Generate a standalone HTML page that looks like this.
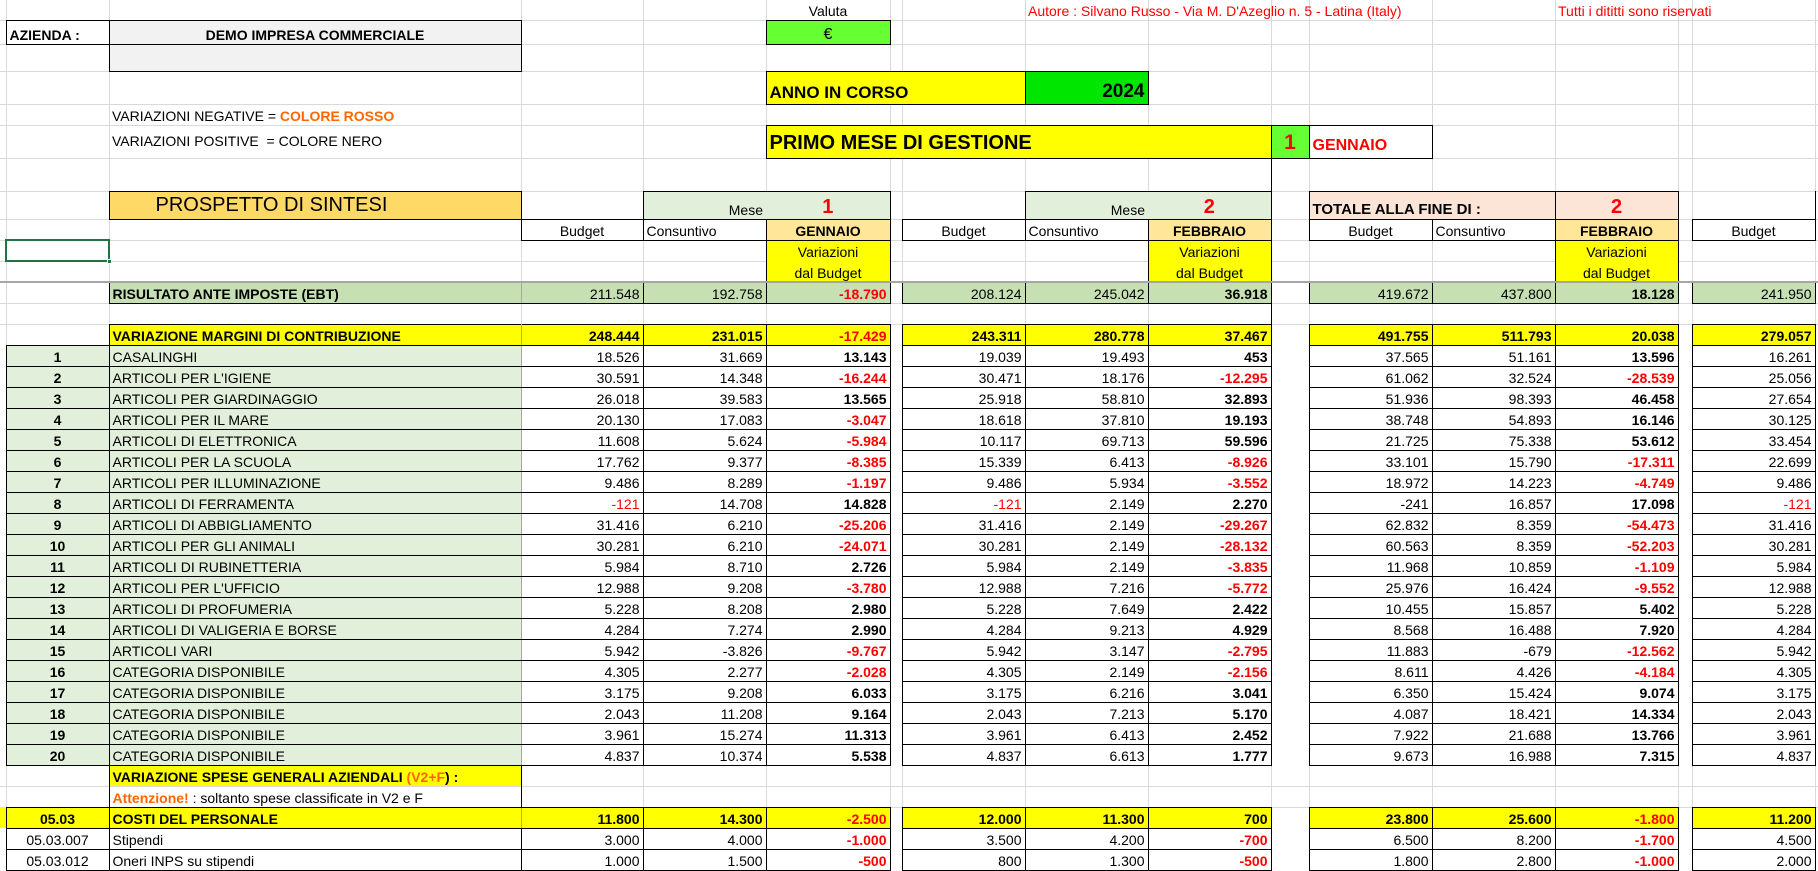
<!DOCTYPE html>
<html><head><meta charset="utf-8"><style>
*{margin:0;padding:0;box-sizing:border-box}
body{width:1818px;height:863px;overflow:hidden;background:#fff;font-family:"Liberation Sans",Arial,sans-serif;font-size:14px;color:#000;position:relative}
.v{position:absolute;top:0;width:1px;height:863px;background:#d9d9d9}
.h{position:absolute;left:0;height:1px;width:1818px;background:#d9d9d9}
table{position:absolute;left:0;top:0;border-collapse:collapse;table-layout:fixed;width:1818px}
td{padding:0 3px;white-space:nowrap;overflow:visible;vertical-align:bottom;line-height:16px;padding-bottom:1px}
.b{border:1px solid #000}
.y{background:#ffff00}.lg{background:#e2efda}.g{background:#c6e0b4}.o{background:#ffe699}.sa{background:#fce4d6}.gr{background:#f2f2f2}
.r,.n{color:#f00}.bd{font-weight:bold}.R{text-align:right}.C{text-align:center}.L{text-align:left}
tr.d td{border:1px solid #000;text-align:right}
tr.d td:nth-child(1),tr.d td:nth-child(7),tr.d td:nth-child(11),tr.d td:nth-child(15),tr.d td:nth-child(17){border:none;background:none}
tr.d td:nth-child(2){background:#e2efda;text-align:center;font-weight:bold}
tr.d td:nth-child(3){background:#e2efda;text-align:left;border-right-color:#a6a6a6}
tr.d td:nth-child(6),tr.d td:nth-child(10),tr.d td:nth-child(14){font-weight:bold}
tr.d.yy td{background:#ffff00;font-weight:bold}
tr.d.yy td:nth-child(7),tr.d.yy td:nth-child(11),tr.d.yy td:nth-child(15),tr.d.yy td:nth-child(17){background:none}
tr.d.e td{background:#c6e0b4}
tr.d.e td:nth-child(1),tr.d.e td:nth-child(7),tr.d.e td:nth-child(11),tr.d.e td:nth-child(15),tr.d.e td:nth-child(17){background:none}
tr.d.e td:nth-child(2){background:none;border:none}
tr.d.e td:nth-child(3){background:#c6e0b4;font-weight:bold}
tr.d.yy.m td:nth-child(1),tr.d.yy.m td:nth-child(2){background:none;border:none}
tr.d.w td:nth-child(2),tr.d.w td:nth-child(3){background:none;font-weight:normal}
tr.d.w td:nth-child(3){border-right-color:#000}
</style></head><body>
<div class="v" style="left:6px"></div><div class="v" style="left:109px"></div><div class="v" style="left:521px"></div><div class="v" style="left:643px"></div><div class="v" style="left:766px"></div><div class="v" style="left:890px"></div><div class="v" style="left:902px"></div><div class="v" style="left:1025px"></div><div class="v" style="left:1148px"></div><div class="v" style="left:1271px"></div><div class="v" style="left:1309px"></div><div class="v" style="left:1432px"></div><div class="v" style="left:1555px"></div><div class="v" style="left:1678px"></div><div class="v" style="left:1692px"></div><div class="v" style="left:1815px"></div>
<div class="h" style="top:20px"></div><div class="h" style="top:44px"></div><div class="h" style="top:71px"></div><div class="h" style="top:104px"></div><div class="h" style="top:125px"></div><div class="h" style="top:158px"></div><div class="h" style="top:191px"></div><div class="h" style="top:219px"></div><div class="h" style="top:240px"></div><div class="h" style="top:261px"></div><div class="h" style="top:303px"></div><div class="h" style="top:324px"></div><div class="h" style="top:786px"></div><div class="h" style="top:807px"></div>
<table>
<colgroup><col style="width:6px"><col style="width:103px"><col style="width:412px"><col style="width:122px"><col style="width:123px"><col style="width:124px"><col style="width:12px"><col style="width:123px"><col style="width:123px"><col style="width:123px"><col style="width:38px"><col style="width:123px"><col style="width:123px"><col style="width:123px"><col style="width:14px"><col style="width:123px"><col style="width:3px"></colgroup>
<tr style="height:20px"><td></td><td></td><td></td><td></td><td></td><td class="C">Valuta</td><td></td><td></td><td class="r">Autore : Silvano Russo - Via M. D'Azeglio n. 5 - Latina (Italy)</td><td></td><td></td><td></td><td></td><td class="r">Tutti i dititti sono riservati</td><td></td><td></td><td></td></tr>
<tr style="height:24px"><td></td><td class="b bd">AZIENDA :</td><td class="b bd C gr">DEMO IMPRESA COMMERCIALE</td><td></td><td></td><td class="b C" style="background:#66ff33;font-size:16px">€</td><td></td><td></td><td></td><td></td><td></td><td></td><td></td><td></td><td></td><td></td><td></td></tr>
<tr style="height:27px"><td></td><td></td><td class="b gr"></td><td></td><td></td><td></td><td></td><td></td><td></td><td></td><td></td><td></td><td></td><td></td><td></td><td></td><td></td></tr>
<tr style="height:33px"><td></td><td></td><td></td><td></td><td></td><td class="b y bd" colspan="3" style="font-size:17px;line-height:20px;border-right:none">ANNO IN CORSO</td><td class="b bd R" style="background:#00e600;font-size:19px;line-height:22px">2024</td><td></td><td></td><td></td><td></td><td></td><td></td><td></td><td></td></tr>
<tr style="height:21px"><td></td><td></td><td>VARIAZIONI NEGATIVE = <b style="color:#ff6600">COLORE ROSSO</b></td><td></td><td></td><td></td><td></td><td></td><td></td><td></td><td></td><td></td><td></td><td></td><td></td><td></td><td></td></tr>
<tr style="height:33px"><td></td><td></td><td style="vertical-align:middle">VARIAZIONI POSITIVE&nbsp; = COLORE NERO</td><td></td><td></td><td class="b y bd" colspan="5" style="font-size:20px;line-height:24px;padding-bottom:3px">PRIMO MESE DI GESTIONE</td><td class="b bd C r" style="background:#66ff33;font-size:21px;line-height:24px;padding-bottom:3px">1</td><td class="b bd r" style="font-size:16px;padding-bottom:4px">GENNAIO</td><td></td><td></td><td></td><td></td><td></td><td></td></tr>
<tr style="height:33px"><td></td><td></td><td></td><td></td><td></td><td></td><td></td><td></td><td></td><td style="border-right:1px solid #000"></td><td></td><td></td><td></td><td></td><td></td><td></td><td></td></tr>
<tr style="height:28px"><td></td><td></td><td class="b" style="background:#ffd966;font-size:20px;line-height:24px;padding-left:46px;padding-bottom:2px">PROSPETTO DI SINTESI</td><td></td><td class="lg R" style="border:1px solid #000;border-right:none">Mese</td><td class="lg C bd r" style="border:1px solid #000;border-left:none;font-size:20px;line-height:22px">1</td><td></td><td></td><td class="lg R" style="border:1px solid #000;border-right:none">Mese</td><td class="lg C bd r" style="border:1px solid #000;border-left:none;font-size:20px;line-height:22px">2</td><td></td><td class="sa bd" colspan="2" style="border:1px solid #000;font-size:15px">TOTALE ALLA FINE DI :</td><td class="sa C bd r b" style="font-size:20px;line-height:22px">2</td><td></td><td style="border-right:1px solid #000"></td><td></td></tr>
<tr style="height:21px"><td></td><td></td><td></td><td class="b C">Budget</td><td class="b">Consuntivo</td><td class="b C bd o">GENNAIO</td><td></td><td class="b C">Budget</td><td class="b">Consuntivo</td><td class="b C bd o">FEBBRAIO</td><td></td><td class="b C">Budget</td><td class="b">Consuntivo</td><td class="b C bd o">FEBBRAIO</td><td></td><td class="b C">Budget</td><td></td></tr>
<tr style="height:21px"><td></td><td></td><td></td><td></td><td></td><td class="y C" style="border-left:1px solid #000;border-right:1px solid #000">Variazioni</td><td></td><td></td><td></td><td class="y C" style="border-left:1px solid #000;border-right:1px solid #000">Variazioni</td><td></td><td></td><td></td><td class="y C" style="border-left:1px solid #000;border-right:1px solid #000">Variazioni</td><td></td><td></td><td></td></tr>
<tr style="height:21px"><td></td><td></td><td></td><td></td><td></td><td class="y C" style="border-left:1px solid #000;border-right:1px solid #000">dal Budget</td><td></td><td></td><td></td><td class="y C" style="border-left:1px solid #000;border-right:1px solid #000">dal Budget</td><td></td><td></td><td></td><td class="y C" style="border-left:1px solid #000;border-right:1px solid #000">dal Budget</td><td></td><td></td><td></td></tr>
<tr class="d e" style="height:21px"><td></td><td></td><td>RISULTATO ANTE IMPOSTE (EBT)</td><td>211.548</td><td>192.758</td><td class="n">-18.790</td><td></td><td>208.124</td><td>245.042</td><td>36.918</td><td></td><td>419.672</td><td>437.800</td><td>18.128</td><td></td><td>241.950</td><td></td></tr>
<tr style="height:21px"><td></td><td></td><td></td><td></td><td></td><td></td><td></td><td></td><td></td><td style="border-right:1px solid #000"></td><td></td><td></td><td></td><td></td><td></td><td></td><td></td></tr>
<tr class="d yy m" style="height:21px"><td></td><td></td><td>VARIAZIONE MARGINI DI CONTRIBUZIONE</td><td>248.444</td><td>231.015</td><td class="n">-17.429</td><td></td><td>243.311</td><td>280.778</td><td>37.467</td><td></td><td>491.755</td><td>511.793</td><td>20.038</td><td></td><td>279.057</td><td></td></tr>
<tr class="d" style="height:21px"><td></td><td>1</td><td>CASALINGHI</td><td>18.526</td><td>31.669</td><td>13.143</td><td></td><td>19.039</td><td>19.493</td><td>453</td><td></td><td>37.565</td><td>51.161</td><td>13.596</td><td></td><td>16.261</td><td></td></tr>
<tr class="d" style="height:21px"><td></td><td>2</td><td>ARTICOLI PER L'IGIENE</td><td>30.591</td><td>14.348</td><td class="n">-16.244</td><td></td><td>30.471</td><td>18.176</td><td class="n">-12.295</td><td></td><td>61.062</td><td>32.524</td><td class="n">-28.539</td><td></td><td>25.056</td><td></td></tr>
<tr class="d" style="height:21px"><td></td><td>3</td><td>ARTICOLI PER GIARDINAGGIO</td><td>26.018</td><td>39.583</td><td>13.565</td><td></td><td>25.918</td><td>58.810</td><td>32.893</td><td></td><td>51.936</td><td>98.393</td><td>46.458</td><td></td><td>27.654</td><td></td></tr>
<tr class="d" style="height:21px"><td></td><td>4</td><td>ARTICOLI PER IL MARE</td><td>20.130</td><td>17.083</td><td class="n">-3.047</td><td></td><td>18.618</td><td>37.810</td><td>19.193</td><td></td><td>38.748</td><td>54.893</td><td>16.146</td><td></td><td>30.125</td><td></td></tr>
<tr class="d" style="height:21px"><td></td><td>5</td><td>ARTICOLI DI ELETTRONICA</td><td>11.608</td><td>5.624</td><td class="n">-5.984</td><td></td><td>10.117</td><td>69.713</td><td>59.596</td><td></td><td>21.725</td><td>75.338</td><td>53.612</td><td></td><td>33.454</td><td></td></tr>
<tr class="d" style="height:21px"><td></td><td>6</td><td>ARTICOLI PER LA SCUOLA</td><td>17.762</td><td>9.377</td><td class="n">-8.385</td><td></td><td>15.339</td><td>6.413</td><td class="n">-8.926</td><td></td><td>33.101</td><td>15.790</td><td class="n">-17.311</td><td></td><td>22.699</td><td></td></tr>
<tr class="d" style="height:21px"><td></td><td>7</td><td>ARTICOLI PER ILLUMINAZIONE</td><td>9.486</td><td>8.289</td><td class="n">-1.197</td><td></td><td>9.486</td><td>5.934</td><td class="n">-3.552</td><td></td><td>18.972</td><td>14.223</td><td class="n">-4.749</td><td></td><td>9.486</td><td></td></tr>
<tr class="d" style="height:21px"><td></td><td>8</td><td>ARTICOLI DI FERRAMENTA</td><td class="n">-121</td><td>14.708</td><td>14.828</td><td></td><td class="n">-121</td><td>2.149</td><td>2.270</td><td></td><td>-241</td><td>16.857</td><td>17.098</td><td></td><td class="n">-121</td><td></td></tr>
<tr class="d" style="height:21px"><td></td><td>9</td><td>ARTICOLI DI ABBIGLIAMENTO</td><td>31.416</td><td>6.210</td><td class="n">-25.206</td><td></td><td>31.416</td><td>2.149</td><td class="n">-29.267</td><td></td><td>62.832</td><td>8.359</td><td class="n">-54.473</td><td></td><td>31.416</td><td></td></tr>
<tr class="d" style="height:21px"><td></td><td>10</td><td>ARTICOLI PER GLI ANIMALI</td><td>30.281</td><td>6.210</td><td class="n">-24.071</td><td></td><td>30.281</td><td>2.149</td><td class="n">-28.132</td><td></td><td>60.563</td><td>8.359</td><td class="n">-52.203</td><td></td><td>30.281</td><td></td></tr>
<tr class="d" style="height:21px"><td></td><td>11</td><td>ARTICOLI DI RUBINETTERIA</td><td>5.984</td><td>8.710</td><td>2.726</td><td></td><td>5.984</td><td>2.149</td><td class="n">-3.835</td><td></td><td>11.968</td><td>10.859</td><td class="n">-1.109</td><td></td><td>5.984</td><td></td></tr>
<tr class="d" style="height:21px"><td></td><td>12</td><td>ARTICOLI PER L'UFFICIO</td><td>12.988</td><td>9.208</td><td class="n">-3.780</td><td></td><td>12.988</td><td>7.216</td><td class="n">-5.772</td><td></td><td>25.976</td><td>16.424</td><td class="n">-9.552</td><td></td><td>12.988</td><td></td></tr>
<tr class="d" style="height:21px"><td></td><td>13</td><td>ARTICOLI DI PROFUMERIA</td><td>5.228</td><td>8.208</td><td>2.980</td><td></td><td>5.228</td><td>7.649</td><td>2.422</td><td></td><td>10.455</td><td>15.857</td><td>5.402</td><td></td><td>5.228</td><td></td></tr>
<tr class="d" style="height:21px"><td></td><td>14</td><td>ARTICOLI DI VALIGERIA E BORSE</td><td>4.284</td><td>7.274</td><td>2.990</td><td></td><td>4.284</td><td>9.213</td><td>4.929</td><td></td><td>8.568</td><td>16.488</td><td>7.920</td><td></td><td>4.284</td><td></td></tr>
<tr class="d" style="height:21px"><td></td><td>15</td><td>ARTICOLI VARI</td><td>5.942</td><td>-3.826</td><td class="n">-9.767</td><td></td><td>5.942</td><td>3.147</td><td class="n">-2.795</td><td></td><td>11.883</td><td>-679</td><td class="n">-12.562</td><td></td><td>5.942</td><td></td></tr>
<tr class="d" style="height:21px"><td></td><td>16</td><td>CATEGORIA DISPONIBILE</td><td>4.305</td><td>2.277</td><td class="n">-2.028</td><td></td><td>4.305</td><td>2.149</td><td class="n">-2.156</td><td></td><td>8.611</td><td>4.426</td><td class="n">-4.184</td><td></td><td>4.305</td><td></td></tr>
<tr class="d" style="height:21px"><td></td><td>17</td><td>CATEGORIA DISPONIBILE</td><td>3.175</td><td>9.208</td><td>6.033</td><td></td><td>3.175</td><td>6.216</td><td>3.041</td><td></td><td>6.350</td><td>15.424</td><td>9.074</td><td></td><td>3.175</td><td></td></tr>
<tr class="d" style="height:21px"><td></td><td>18</td><td>CATEGORIA DISPONIBILE</td><td>2.043</td><td>11.208</td><td>9.164</td><td></td><td>2.043</td><td>7.213</td><td>5.170</td><td></td><td>4.087</td><td>18.421</td><td>14.334</td><td></td><td>2.043</td><td></td></tr>
<tr class="d" style="height:21px"><td></td><td>19</td><td>CATEGORIA DISPONIBILE</td><td>3.961</td><td>15.274</td><td>11.313</td><td></td><td>3.961</td><td>6.413</td><td>2.452</td><td></td><td>7.922</td><td>21.688</td><td>13.766</td><td></td><td>3.961</td><td></td></tr>
<tr class="d" style="height:21px"><td></td><td>20</td><td>CATEGORIA DISPONIBILE</td><td>4.837</td><td>10.374</td><td>5.538</td><td></td><td>4.837</td><td>6.613</td><td>1.777</td><td></td><td>9.673</td><td>16.988</td><td>7.315</td><td></td><td>4.837</td><td></td></tr>
<tr style="height:21px"><td></td><td></td><td class="y bd" style="border:1px solid #000;border-bottom:none">VARIAZIONE SPESE GENERALI AZIENDALI <span style="color:#ff6600">(V2+F</span>) :</td><td></td><td></td><td></td><td></td><td></td><td></td><td></td><td></td><td></td><td></td><td></td><td></td><td></td><td></td></tr>
<tr style="height:21px"><td></td><td></td><td style="border:1px solid #000;border-top:none"><b style="color:#ff6600">Attenzione!</b> : soltanto spese classificate in V2 e F</td><td></td><td></td><td></td><td></td><td></td><td></td><td></td><td></td><td></td><td></td><td></td><td></td><td></td><td></td></tr>
<tr class="d yy" style="height:21px"><td></td><td>05.03</td><td>COSTI DEL PERSONALE</td><td>11.800</td><td>14.300</td><td class="n">-2.500</td><td></td><td>12.000</td><td>11.300</td><td>700</td><td></td><td>23.800</td><td>25.600</td><td class="n">-1.800</td><td></td><td>11.200</td><td></td></tr>
<tr class="d w" style="height:21px"><td></td><td>05.03.007</td><td>Stipendi</td><td>3.000</td><td>4.000</td><td class="n">-1.000</td><td></td><td>3.500</td><td>4.200</td><td class="n">-700</td><td></td><td>6.500</td><td>8.200</td><td class="n">-1.700</td><td></td><td>4.500</td><td></td></tr>
<tr class="d w" style="height:21px"><td></td><td>05.03.012</td><td>Oneri INPS su stipendi</td><td>1.000</td><td>1.500</td><td class="n">-500</td><td></td><td>800</td><td>1.300</td><td class="n">-500</td><td></td><td>1.800</td><td>2.800</td><td class="n">-1.000</td><td></td><td>2.000</td><td></td></tr>
</table>
<div style="position:absolute;left:0;top:281px;width:1818px;height:2px;background:#a6a6a6"></div>
<div style="position:absolute;left:5px;top:239px;width:105px;height:23px;border:2px solid #217346"></div>
<div style="position:absolute;left:107px;top:259px;width:5px;height:5px;background:#217346;border:1px solid #fff"></div>
</body></html>
